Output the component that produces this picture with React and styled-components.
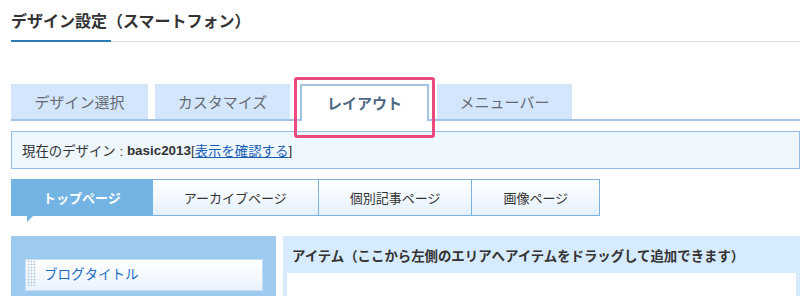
import React from "react";
import styled, { createGlobalStyle } from "styled-components";

const GlobalStyle = createGlobalStyle`
  html, body {
    margin: 0;
    padding: 0;
    background: #ffffff;
    overflow: hidden;
  }
  body {
    font-family: "Liberation Sans", "Noto Sans CJK JP", sans-serif;
    color: #333333;
  }
`;

const Page = styled.div`
  width: 789px;
  padding: 12px 0 0 11px;
`;

const Heading = styled.h2`
  margin: 0;
  height: 30px;
  font-size: 16px;
  font-weight: bold;
  line-height: 20px;
  color: #333333;
  background:
    linear-gradient(#2a7cb3, #2a7cb3) left bottom / 100px 2px no-repeat,
    linear-gradient(#dddddd, #dddddd) left bottom / 100% 1px no-repeat;
`;

const TabBar = styled.div`
  display: flex;
  gap: 7px;
  margin-top: 42px;
  height: 35px;
  border-bottom: 2px solid #a3c3e4;
`;

const Tab = styled.div`
  position: relative;
  width: ${(p) => p.w}px;
  display: flex;
  align-items: center;
  justify-content: center;
  font-size: 15px;
  color: #666b73;
  background: #d4e6fb;
  box-sizing: border-box;

  ${(p) =>
    p.active &&
    `
    margin: 0 1px -2px 3px;
    height: 37px;
    background: #ffffff;
    border: 2px solid #a3c3e4;
    border-bottom: none;
    font-weight: bold;
    color: #4e6884;
    padding-bottom: 2px;
  `}
`;

const Highlight = styled.div`
  position: absolute;
  left: -8px;
  right: -8px;
  top: -9px;
  bottom: -17px;
  border: 3px solid #ea4a7e;
  border-radius: 3px;
  pointer-events: none;
`;

const InfoBox = styled.div`
  margin-top: 10px;
  height: 38px;
  box-sizing: border-box;
  display: flex;
  align-items: center;
  padding-left: 10px;
  font-size: 13.4px;
  color: #333333;
  background: #eef6fe;
  border: 1px solid #93bde8;

  b {
    font-weight: bold;
    color: #333333;
  }
  a {
    color: #1a5fb4;
    text-decoration: underline;
  }
`;

const SubTabs = styled.div`
  display: flex;
  margin-top: 10px;
  height: 37px;
`;

const SubTab = styled.div`
  position: relative;
  display: flex;
  align-items: center;
  padding: 0 31px;
  font-size: 13px;
  color: #333333;
  background: linear-gradient(#ffffff, #e4f1fd);
  border: 1px solid #7fb3de;
  border-left: none;

  ${(p) =>
    p.active &&
    `
    padding: 0 32px;
    border: none;
    background: #73b4e4;
    color: #ffffff;
    font-weight: bold;
    &::after {
      content: "";
      position: absolute;
      left: 16px;
      bottom: -6px;
      border-top: 6px solid #73b4e4;
      border-right: 6px solid transparent;
    }
  `}
`;

const Columns = styled.div`
  display: flex;
  gap: 7px;
  margin-top: 20px;
  height: 60px;
`;

const LeftPanel = styled.div`
  width: 265px;
  background: #9dcbf0;
  padding: 23px 13px 0 14px;
  box-sizing: border-box;
  overflow: hidden;
`;

const Item = styled.div`
  display: flex;
  align-items: center;
  height: 26px;
  padding-bottom: 4px;
  background: linear-gradient(#ffffff, #e9f3fd);
  border: 1px solid #c9def2;
  font-size: 13.5px;
  color: #1e6cc2;
`;

const Grip = styled.span`
  align-self: stretch;
  width: 9px;
  margin: 0 8px 0 1px;
  background-image: radial-gradient(circle, #b7cde2 0.9px, transparent 1.1px);
  background-size: 3px 3px;
`;

const RightPanel = styled.div`
  flex: 1;
  display: flex;
  flex-direction: column;
  background: #d6ebfd;
`;

const PanelHeader = styled.div`
  height: 37px;
  flex-shrink: 0;
  display: flex;
  align-items: center;
  padding-left: 9px;
  font-size: 13.4px;
  font-weight: bold;
  color: #333333;
`;

const PanelBody = styled.div`
  flex: 1;
  margin: 0 4px;
  background: #ffffff;
`;

const tabs = [
  { label: "デザイン選択", w: 137 },
  { label: "カスタマイズ", w: 135 },
  { label: "レイアウト", w: 129, active: true },
  { label: "メニューバー", w: 135 },
];

const subTabs = ["トップページ", "アーカイブページ", "個別記事ページ", "画像ページ"];

export default function App() {
  return (
    <>
      <GlobalStyle />
      <Page>
        <Heading>デザイン設定（スマートフォン）</Heading>
        <TabBar>
          {tabs.map((t) => (
            <Tab key={t.label} w={t.w} active={t.active}>
              {t.label}
              {t.active && <Highlight />}
            </Tab>
          ))}
        </TabBar>
        <InfoBox>
          {"現在のデザイン :\u00a0"}
          <b>basic2013</b>[<a href="#">表示を確認する</a>]
        </InfoBox>
        <SubTabs>
          {subTabs.map((s, i) => (
            <SubTab key={s} active={i === 0}>
              {s}
            </SubTab>
          ))}
        </SubTabs>
        <Columns>
          <LeftPanel>
            <Item>
              <Grip />
              ブログタイトル
            </Item>
          </LeftPanel>
          <RightPanel>
            <PanelHeader>
              アイテム（ここから左側のエリアへアイテムをドラッグして追加できます）
            </PanelHeader>
            <PanelBody />
          </RightPanel>
        </Columns>
      </Page>
    </>
  );
}
